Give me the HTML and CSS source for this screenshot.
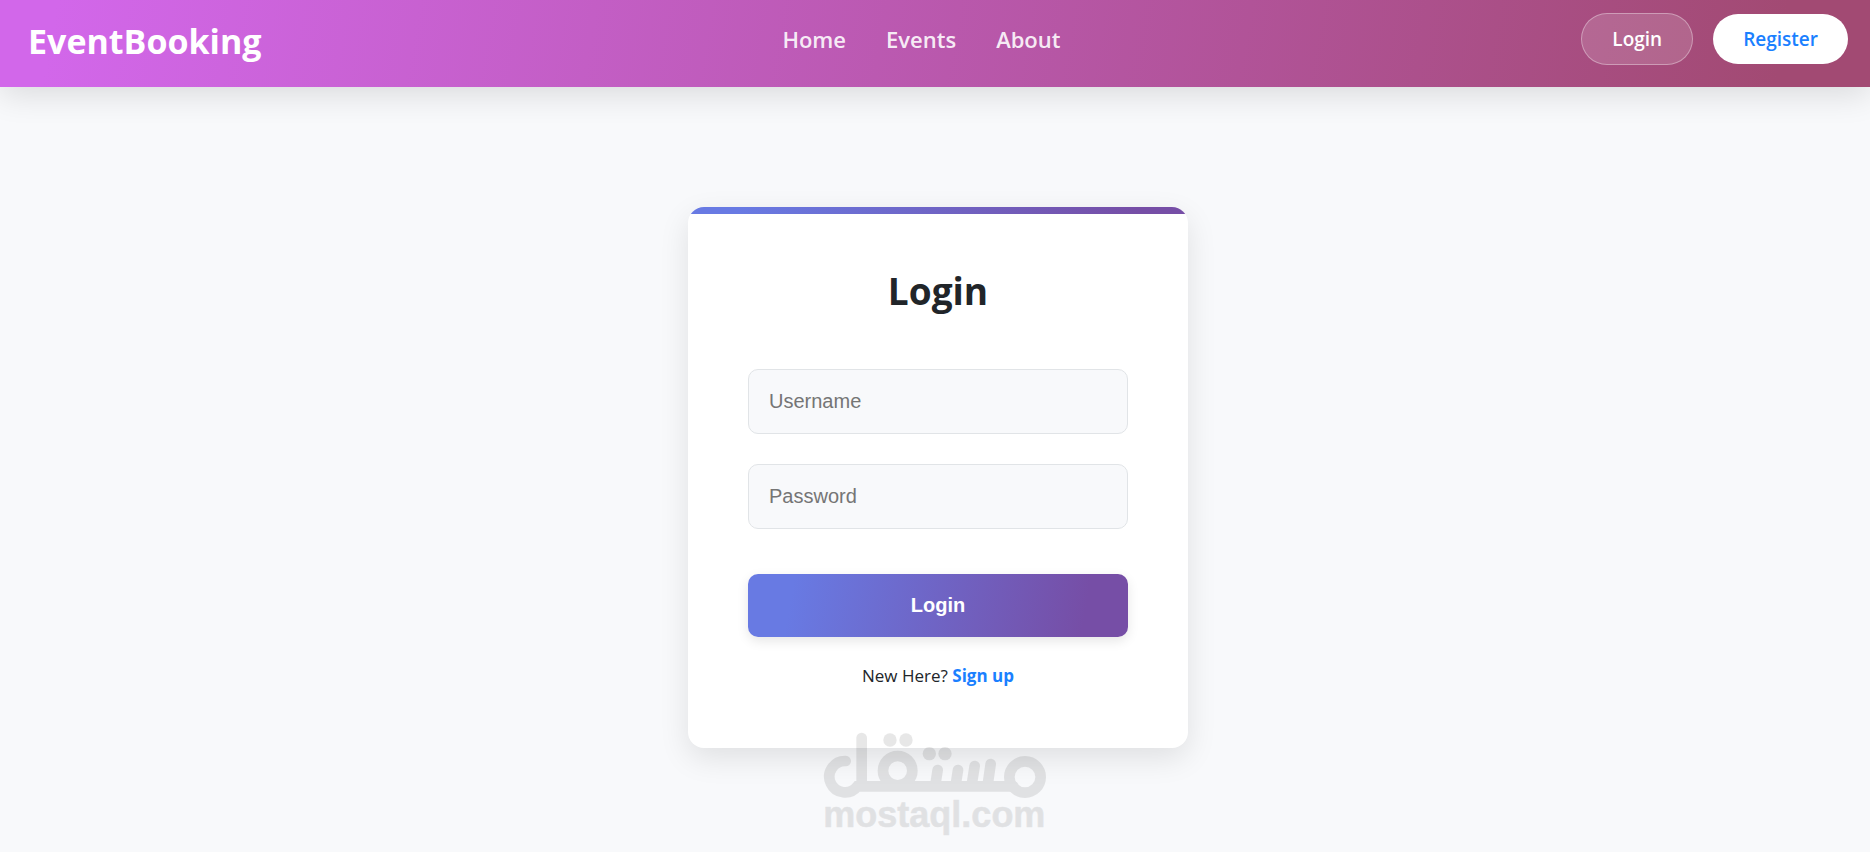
FILE: index.html
```html
<!DOCTYPE html>
<html lang="en">
<head>
    <meta charset="UTF-8">
    <meta name="viewport" content="width=device-width, initial-scale=1.0">
    <title>EventBooking - Login</title>
    <link rel="stylesheet" href="styles.css">
</head>
<body>
    <header class="navbar">
        <a class="logo" href="#">EventBooking</a>
        <nav class="links">
            <a href="#">Home</a>
            <a href="#">Events</a>
            <a href="#">About</a>
        </nav>
        <div class="actions">
            <a class="btn btn-login" href="#">Login</a>
            <a class="btn btn-register" href="#">Register</a>
        </div>
    </header>
    <main class="page">
        <form class="card">
            <h2>Login</h2>
            <input type="text" name="username" placeholder="Username" aria-label="Username">
            <input type="password" name="password" placeholder="Password" aria-label="Password">
            <button type="submit">Login</button>
            <p class="signup">New Here? <a href="#">Sign up</a></p>
        </form>
    </main>
    <div class="watermark">
        <svg width="230" height="110" viewBox="60 60 690 330" role="img" aria-label="mostaql.com">
            <g fill="none" stroke="#000" stroke-width="32" stroke-linecap="round">
                <path d="M137 153A47 47 0 1 0 172 229H640"/>
                <path d="M185 84V222"/>
                <circle cx="293" cy="182" r="44"/>
                <path d="M413 180L406 225M474 180L467 225M524 168L515 225M572 162L563 225"/>
                <circle cx="675" cy="201" r="47"/>
            </g>
            <circle cx="270" cy="90" r="20"/>
            <circle cx="318" cy="90" r="20"/>
            <circle cx="388" cy="131" r="20"/>
            <circle cx="435" cy="131" r="20"/>
            <text x="70" y="351">mostaql.com</text>
        </svg>
    </div>
</body>
</html>
```
FILE: styles.css
```css
*{
    box-sizing: border-box;
}
body{
    margin: 0;
    min-height: 100vh;
    position: relative;
    background-color: #f8f9fb;
    color: #212529;
    font-family: "Segoe UI", "Open Sans", "Noto Sans", sans-serif;
}
a{
    text-decoration: none;
}

/* header */
.navbar{
    display: flex;
    justify-content: space-between;
    align-items: center;
    height: 87px;
    padding: 0 22px 10px 28px;
    background: linear-gradient(100deg, #d267ea 3%, #a24a73 95%);
    box-shadow: 0 8px 32px rgba(0,0,0,0.12);
}
.logo{
    font-size: 34px;
    line-height: 48px;
    padding-top: 4px;
    font-weight: bold;
    color: #fff;
}
.links{
    display: flex;
    gap: 40px;
}
.links a{
    font-size: 22px;
    font-weight: 600;
    color: rgba(255,255,255,0.9);
}
.actions{
    display: flex;
    justify-content: flex-end;
    align-items: center;
    gap: 20px;
}
.btn{
    padding: 0 30px;
    font-size: 19px;
    font-weight: 600;
    line-height: 50px;
    border-radius: 26px;
}
.btn-login{
    color: #fff;
    background-color: rgba(255,255,255,0.15);
    border: 1px solid rgba(255,255,255,0.35);
}
.btn-register{
    color: #1a80ff;
    background-color: #fff;
}

/* login card */
.page{
    display: flex;
    justify-content: center;
    padding: 120px 0 60px 6px;
}
.card{
    position: relative;
    display: flex;
    flex-direction: column;
    width: 500px;
    max-width: 100%;
    padding: 60px;
    background-color: #fff;
    border-radius: 16px;
    box-shadow: 0 10px 30px rgba(0,0,0,0.1);
    overflow: hidden;
}
.card::before{
    content: "";
    position: absolute;
    top: 0;
    left: 0;
    right: 0;
    height: 7px;
    background: linear-gradient(100deg, #687ae3 10%, #764ea6 90%);
}
.card h2{
    margin: 0 0 54px;
    font-size: 37px;
    line-height: 48px;
    text-align: center;
}
.card input{
    height: 65px;
    margin-bottom: 30px;
    padding: 0 20px;
    font-family: "Liberation Sans", Arial, sans-serif;
    font-size: 20px;
    background-color: #f8f9fb;
    border: 1px solid #e1e4e7;
    border-radius: 10px;
}
.card input::placeholder{
    color: #757575;
}
.card button{
    height: 63px;
    margin-top: 15px;
    font-family: "Liberation Sans", Arial, sans-serif;
    font-size: 20px;
    font-weight: bold;
    color: #fff;
    background: linear-gradient(100deg, #687ae3 12%, #764ea6 88%);
    border: none;
    border-radius: 10px;
    box-shadow: 0 4px 12px rgba(0,0,0,0.1);
}
.signup{
    margin: 27px 0 0;
    font-size: 17px;
    line-height: 24px;
    text-align: center;
}
.signup a{
    font-weight: bold;
    color: #1a80ff;
}

/* watermark lies over the card edge */
.watermark{
    position: absolute;
    left: 0;
    right: 0;
    bottom: 12px;
    display: flex;
    justify-content: center;
    opacity: 0.09;
    pointer-events: none;
}
.watermark text{
    font-family: "Liberation Sans", Arial, sans-serif;
    font-size: 108px;
    font-weight: bold;
    stroke: #000;
    stroke-width: 2;
    stroke-linejoin: round;
}
```
